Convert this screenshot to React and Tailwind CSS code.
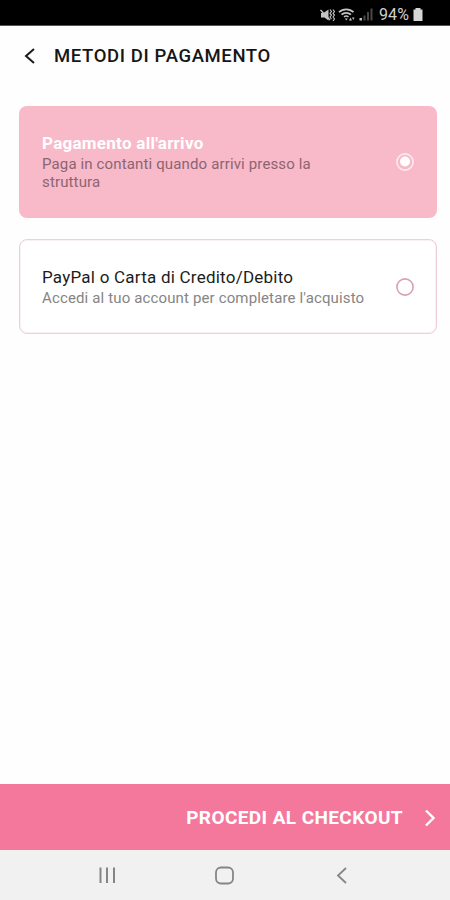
const methods = [
  {
    id: "arrival",
    title: "Pagamento all'arrivo",
    description: "Paga in contanti quando arrivi presso la struttura",
    selected: true,
  },
  {
    id: "paypal",
    title: "PayPal o Carta di Credito/Debito",
    description: "Accedi al tuo account per completare l'acquisto",
    selected: false,
  },
];

function StatusBar() {
  return (
    <div className="flex h-[26px] shrink-0 items-center justify-end border-b border-[#555] bg-black pt-[4px] pr-[27px] text-[#c4c4c4]">
      {/* muted + vibrate */}
      <svg className="mr-[3px]" width="15" height="14" viewBox="0 0 15 14" fill="none">
        <path d="M1 5h2.500L8.500 1.500v11L4.500 9.500H1z" fill="currentColor" />
        <path d="M0.500 2l9.500 10" stroke="currentColor" strokeWidth="1.500" />
        <path d="M10 1.500l1.500 2-1.500 2L11.500 7 10 9l1.500 2M13 1.500l1.500 2-1.500 2L14.500 7 13 9l1.500 2-1.500 2" stroke="currentColor" strokeWidth="1.100" />
      </svg>
      <svg className="mr-[4px]" width="17" height="14" viewBox="0 0 17 14" fill="none" stroke="currentColor">
        <path d="M1 4.200c4-3.800 10.500-3.800 14.500 0" strokeWidth="1.800" />
        <path d="M3.500 6.700c2.700-2.500 6.800-2.500 9.500 0" strokeWidth="1.800" />
        <path d="M6 9c1.300-1.200 3.200-1.200 4.500 0" strokeWidth="1.500" />
        <path d="M6.800 10.500h3l-1.500 2z" fill="currentColor" stroke="none" />
        <path d="M11 12.500l1.500-3 1.500 3zM14 9.500h2.500l-1.200 2.500z" fill="currentColor" stroke="none" />
      </svg>
      <svg className="mr-[6px]" width="14" height="13" viewBox="0 0 14 13">
        <path d="M0.500 10h2.500v2.500H0.500z" fill="currentColor" />
        <path d="M4.500 7.500h2v5h-2zM8 4h2v8.500H8zM11.500 0.500h2v12h-2z" fill="#484848" />
      </svg>
      <span className="mt-px mr-[4px] text-[16px] leading-none tracking-[0.1px] text-[#d0d0d0]">
        94%
      </span>
      <svg width="10" height="13" viewBox="0 0 10 13" fill="#d6d6d6">
        <path d="M2.500 0h5v1.500H9.500v11.500H0.500V1.500h2z" />
      </svg>
    </div>
  );
}

function Radio({ selected }) {
  return (
    <svg className="shrink-0" width="18" height="18" viewBox="0 0 18 18">
      <circle
        cx="9"
        cy="9"
        r="8.100"
        fill="none"
        stroke={selected ? "#fdeaf0" : "#d9a0b2"}
        strokeWidth="1.600"
      />
      {selected && <circle cx="9" cy="8.500" r="5" fill="#fff" />}
    </svg>
  );
}

function MethodCard({ title, description, selected }) {
  return (
    <div
      className={`flex items-center justify-between rounded-lg ${
        selected
          ? "h-28 bg-[#f8b9c9] px-[23px]"
          : "h-[95px] border border-[#efcfd8] bg-white px-[22px] shadow-[inset_0_0_0_1px_#fbf1f4]"
      }`}
    >
      <div className="w-[326px]">
        <h2
          className={`-mt-px text-[17px] leading-[22px] whitespace-nowrap ${
            selected
              ? "font-bold tracking-[0.27px] text-white"
              : "tracking-[0.23px] text-[#1c1c1c]"
          }`}
        >
          {title}
        </h2>
        <p
          className={`mt-px text-[15px] leading-[18px] tracking-[0.14px] ${
            selected ? "w-[290px] text-[#8c6571]" : "whitespace-nowrap text-[#858585]"
          }`}
        >
          {description}
        </p>
      </div>
      <Radio selected={selected} />
    </div>
  );
}

function Header() {
  return (
    <header className="flex h-[60px] shrink-0 items-center pl-6">
      <svg width="12" height="18" viewBox="0 0 12 18" fill="none" stroke="#1a1a1a" strokeWidth="2">
        <path d="M10 2L2 9l8 7" />
      </svg>
      <h1 className="mt-0.5 ml-[18px] text-[18.5px] font-medium tracking-[0.62px] text-[#161616]">
        METODI DI PAGAMENTO
      </h1>
    </header>
  );
}

function NavBar() {
  return (
    <nav className="flex h-[50px] shrink-0 items-center bg-[#f1f1f1] pl-[98px] text-[#858585]">
      <svg width="18" height="18" viewBox="0 0 18 18" fill="none" stroke="currentColor" strokeWidth="2">
        <path d="M2.500 1.500v15.500M9 1.500v15.500M16 1.500v15.500" />
      </svg>
      <svg className="ml-[99px]" width="19" height="19" viewBox="0 0 19 19" fill="none" stroke="currentColor" strokeWidth="1.800">
        <rect x="1" y="1.500" width="17" height="16" rx="5" />
      </svg>
      <svg className="ml-[102px]" width="12" height="18" viewBox="0 0 12 18" fill="none" stroke="currentColor" strokeWidth="1.800">
        <path d="M10 2L2 9.500l8 7.500" />
      </svg>
    </nav>
  );
}

export default function App() {
  return (
    <div className="flex h-[900px] w-[450px] flex-col overflow-hidden bg-[#fefefe] font-['Roboto',sans-serif]">
      <StatusBar />
      <Header />
      <main className="flex flex-1 flex-col gap-[21px] pt-5 pr-[13px] pl-[19px]">
        {methods.map((method) => (
          <MethodCard key={method.id} {...method} />
        ))}
      </main>
      <button className="flex h-[66px] shrink-0 items-center justify-end bg-[#f4789c] pt-[3px] pr-[14px] text-white">
        <span className="text-[19px] font-bold tracking-[0.4px]">PROCEDI AL CHECKOUT</span>
        <svg className="-mt-px ml-[21px]" width="12" height="18" viewBox="0 0 12 18" fill="none" stroke="currentColor" strokeWidth="2.400">
          <path d="M2 1.500L9.500 9 2 16.500" />
        </svg>
      </button>
      <NavBar />
    </div>
  );
}
